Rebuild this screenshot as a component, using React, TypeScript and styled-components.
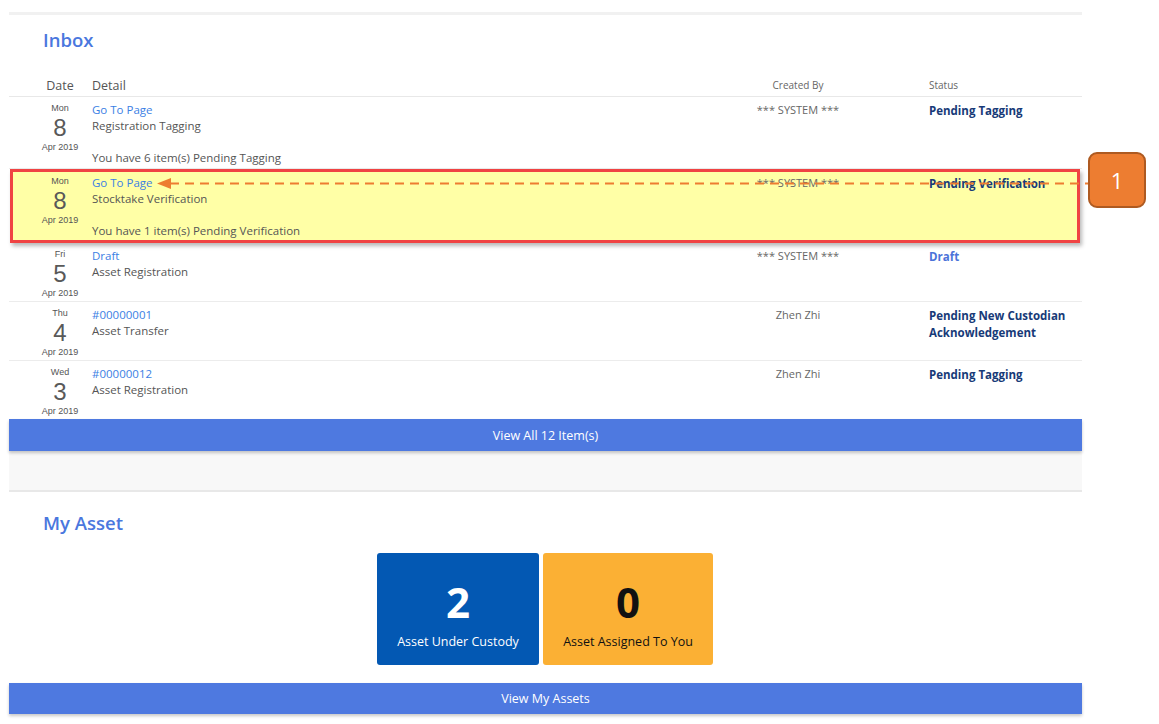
import React from "react";
import styled, { createGlobalStyle, css } from "styled-components";

const GlobalStyle = createGlobalStyle`
  html, body { margin: 0; padding: 0; background: #ffffff; }
  body { font-family: "Open Sans", "Noto Sans", "Liberation Sans", sans-serif; color: #555555; }
  * { box-sizing: border-box; }
`;

const Page = styled.div`
  position: relative;
  width: 1159px;
  height: 724px;
  overflow: hidden;
  padding: 12px 0 0 9px;
`;

const Panel = styled.div`
  width: 1073px;
  display: flex;
  flex-direction: column;
`;

const TopEdge = styled.div`
  height: 3px;
  background: #f1f1f1;
`;

const SectionTitle = styled.h2<{ $top: number }>`
  margin: ${(p) => p.$top}px 0 0 34px;
  font-size: 18.5px;
  line-height: 26px;
  font-weight: 600;
  color: #4a77de;
`;

const columns = css`
  display: grid;
  grid-template-columns: 64px 575px 262px 153px;
`;

const HeaderRow = styled.div`
  ${columns};
  margin-top: 21px;
  height: 23px;
  padding-left: 19px;
  align-items: center;
  border-bottom: 1px solid #e8e8e8;
`;

const HeaderCell = styled.div<{ $small?: boolean; $center?: boolean }>`
  font-size: ${(p) => (p.$small ? "10px" : "12.5px")};
  color: ${(p) => (p.$small ? "#666" : "#555")};
  text-align: ${(p) => (p.$center ? "center" : "left")};
`;

const Row = styled.div<{ $highlight?: boolean; $last?: boolean }>`
  ${columns};
  padding: 5px 0 2px 19px;
  border-bottom: 1px solid #ececec;
  ${(p) => p.$last && "border-bottom: none;"}
  ${(p) =>
    p.$highlight &&
    css`
      margin: 0 2px 0 1px;
      padding: 3px 0 1px 15px;
      background: #ffffa6;
      border: 3px solid #f04343;
      box-shadow: 2px 3px 4px rgba(0, 0, 0, 0.28);
      position: relative;
    `}
`;

const DateCell = styled.div`
  display: flex;
  flex-direction: column;
  align-items: center;
  color: #555;
  font-family: "Liberation Sans", Arial, sans-serif;
  padding-top: 1px;
`;

const DayName = styled.span`
  font-size: 9px;
  line-height: 11px;
`;

const DayNum = styled.span`
  font-size: 24px;
  line-height: 28px;
  font-weight: 400;
  color: #595959;
`;

const Month = styled.span`
  font-size: 9px;
  line-height: 11px;
`;

const Detail = styled.div`
  font-size: 11.5px;
  line-height: 16px;
  color: #555;
  display: flex;
  flex-direction: column;
`;

const Link = styled.a`
  color: #3b80e4;
  text-decoration: none;
`;

const Spacer = styled.span`
  height: 16px;
`;

const CreatedBy = styled.div`
  font-size: 11px;
  line-height: 16px;
  color: #666;
  text-align: center;
`;

const Status = styled.div<{ $draft?: boolean }>`
  font-size: 11.5px;
  line-height: 17px;
  font-weight: 700;
  color: ${(p) => (p.$draft ? "#4b73d9" : "#173a78")};
`;

const WideButton = styled.div<{ $height: number; $top?: number }>`
  height: ${(p) => p.$height}px;
  margin-top: ${(p) => p.$top ?? 0}px;
  background: #4e79e0;
  color: #ffffff;
  font-size: 12.5px;
  display: flex;
  align-items: center;
  justify-content: center;
  box-shadow: 0 2px 3px rgba(0, 0, 0, 0.22);
  position: relative;
  z-index: 1;
`;

const GrayBand = styled.div`
  height: 41px;
  background: #f8f8f8;
  border-bottom: 2px solid #e8e8e8;
`;

const Tiles = styled.div`
  display: flex;
  justify-content: center;
  gap: 4px;
  margin-top: 17px;
  padding-right: 1px;
`;

const Tile = styled.div<{ $tone: "blue" | "orange" }>`
  height: 112px;
  width: ${(p) => (p.$tone === "blue" ? 162 : 170)}px;
  border-radius: 3px;
  background: ${(p) => (p.$tone === "blue" ? "#0358b3" : "#fbb034")};
  color: ${(p) => (p.$tone === "blue" ? "#ffffff" : "#111111")};
  display: flex;
  flex-direction: column;
  align-items: center;
  padding-top: 25px;
`;

const TileNumber = styled.div`
  font-size: 42px;
  line-height: 48px;
  font-weight: 700;
`;

const TileLabel = styled.div`
  margin-top: 8px;
  font-size: 12.5px;
  line-height: 16px;
  white-space: nowrap;
`;

const Overlay = styled.svg`
  position: absolute;
  left: 0;
  top: 0;
  pointer-events: none;
  z-index: 5;
`;

const Callout = styled.div`
  position: absolute;
  left: 1088px;
  top: 152px;
  width: 58px;
  height: 56px;
  border-radius: 9px;
  background: #ed7d31;
  border: 2px solid #ae5a21;
  color: #ffffff;
  font-size: 22px;
  display: flex;
  align-items: center;
  justify-content: center;
  z-index: 6;
`;

type Item = {
  day: string;
  num: string;
  link: string;
  detail: string;
  note?: string;
  by: string;
  status: string;
  draft?: boolean;
  highlight?: boolean;
};

const items: Item[] = [
  {
    day: "Mon",
    num: "8",
    link: "Go To Page",
    detail: "Registration Tagging",
    note: "You have 6 item(s) Pending Tagging",
    by: "*** SYSTEM ***",
    status: "Pending Tagging",
  },
  {
    day: "Mon",
    num: "8",
    link: "Go To Page",
    detail: "Stocktake Verification",
    note: "You have 1 item(s) Pending Verification",
    by: "*** SYSTEM ***",
    status: "Pending Verification",
    highlight: true,
  },
  {
    day: "Fri",
    num: "5",
    link: "Draft",
    detail: "Asset Registration",
    by: "*** SYSTEM ***",
    status: "Draft",
    draft: true,
  },
  {
    day: "Thu",
    num: "4",
    link: "#00000001",
    detail: "Asset Transfer",
    by: "Zhen Zhi",
    status: "Pending New Custodian Acknowledgement",
  },
  {
    day: "Wed",
    num: "3",
    link: "#00000012",
    detail: "Asset Registration",
    by: "Zhen Zhi",
    status: "Pending Tagging",
  },
];

export default function App() {
  return (
    <>
      <GlobalStyle />
      <Page>
        <Panel>
          <TopEdge />
          <SectionTitle $top={12}>Inbox</SectionTitle>
          <HeaderRow>
            <HeaderCell $center>Date</HeaderCell>
            <HeaderCell>Detail</HeaderCell>
            <HeaderCell $small $center>
              Created By
            </HeaderCell>
            <HeaderCell $small>Status</HeaderCell>
          </HeaderRow>
          {items.map((it, i) => (
            <Row key={i} $highlight={it.highlight} $last={i === items.length - 1}>
              <DateCell>
                <DayName>{it.day}</DayName>
                <DayNum>{it.num}</DayNum>
                <Month>Apr 2019</Month>
              </DateCell>
              <Detail>
                <Link>{it.link}</Link>
                <span>{it.detail}</span>
                {it.note && (
                  <>
                    <Spacer />
                    <span>{it.note}</span>
                  </>
                )}
              </Detail>
              <CreatedBy>{it.by}</CreatedBy>
              <Status $draft={it.draft}>{it.status}</Status>
            </Row>
          ))}
          <WideButton $height={32}>View All 12 Item(s)</WideButton>
          <GrayBand />
          <SectionTitle $top={18}>My Asset</SectionTitle>
          <Tiles>
            <Tile $tone="blue">
              <TileNumber>2</TileNumber>
              <TileLabel>Asset Under Custody</TileLabel>
            </Tile>
            <Tile $tone="orange">
              <TileNumber>0</TileNumber>
              <TileLabel>Asset Assigned To You</TileLabel>
            </Tile>
          </Tiles>
          <WideButton $height={31} $top={18}>
            View My Assets
          </WideButton>
        </Panel>
        <Overlay width={1159} height={724} viewBox="0 0 1159 724">
          <line
            x1={170}
            y1={183.5}
            x2={1088}
            y2={183.5}
            stroke="#ed7d31"
            strokeWidth={2}
            strokeDasharray="9 6"
          />
          <polygon points="157,183.5 171,178 171,189" fill="#ed7d31" />
        </Overlay>
        <Callout>1</Callout>
      </Page>
    </>
  );
}
